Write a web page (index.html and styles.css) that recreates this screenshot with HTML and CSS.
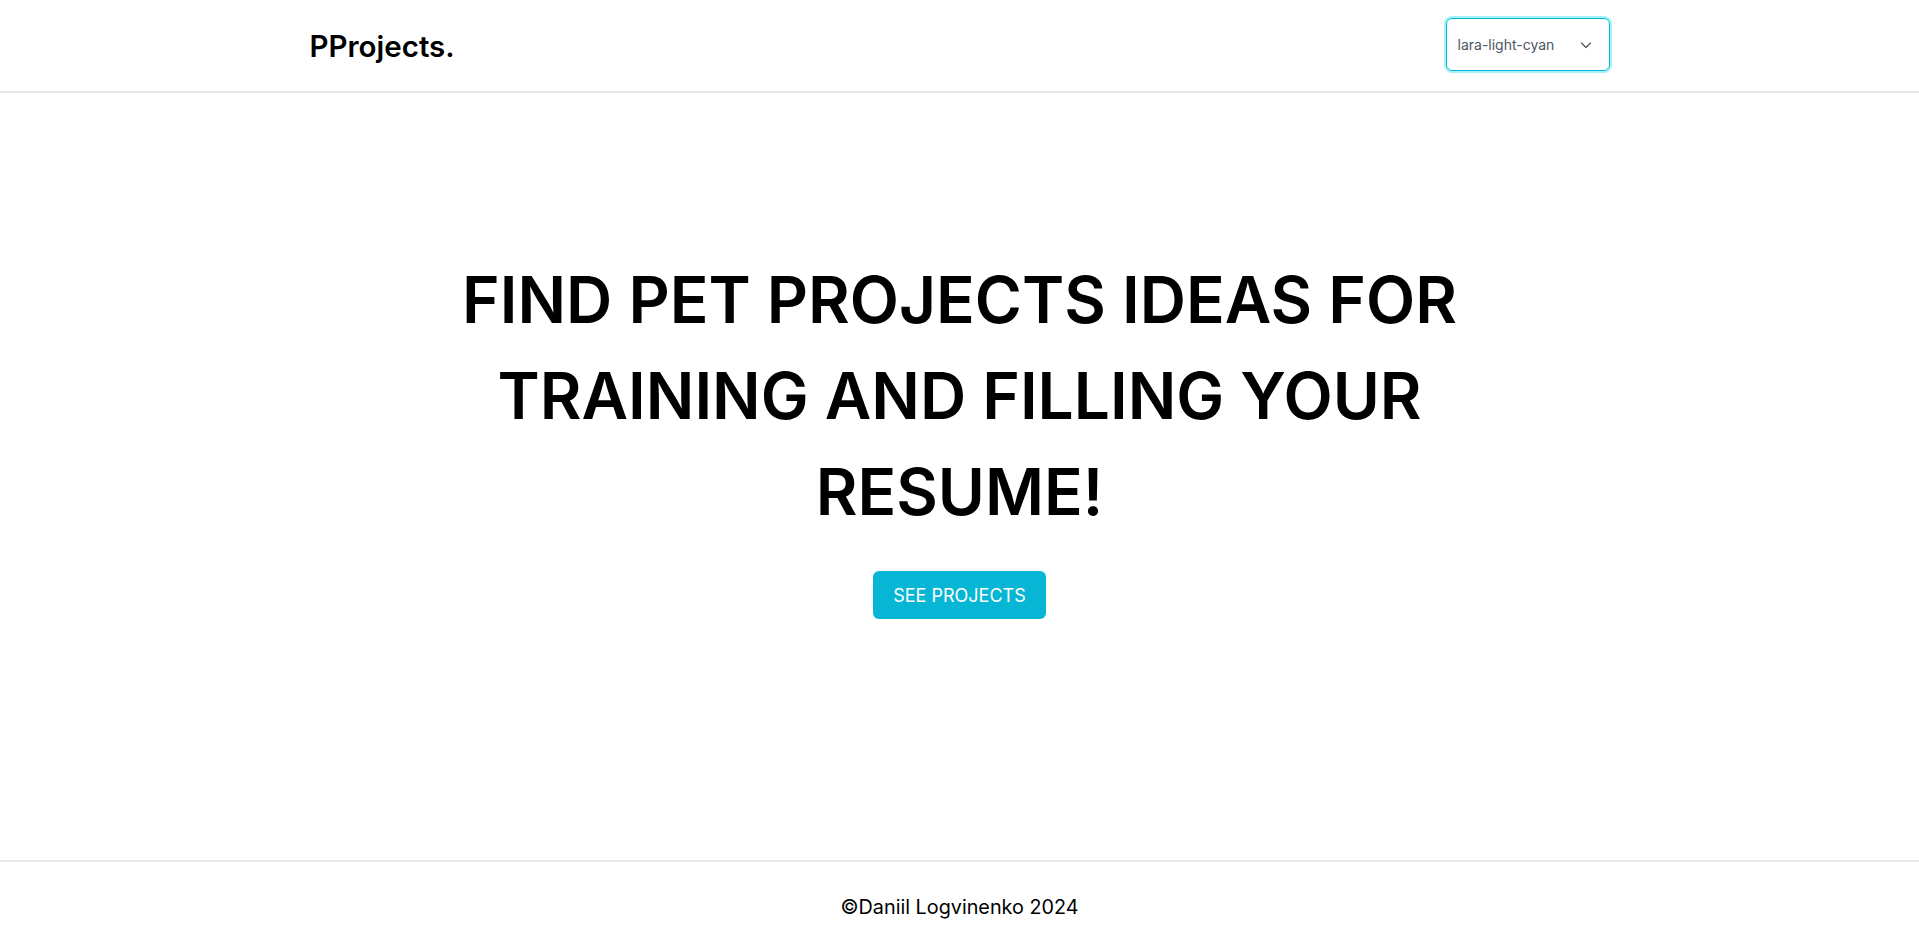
FILE: index.html
```html
<!DOCTYPE html>
<html lang="en">
<head>
<meta charset="utf-8">
<title>PProjects.</title>
<link rel="stylesheet" href="styles.css">
</head>
<body>
<div class="page">
  <header class="header">
    <div class="container header-inner">
      <a class="logo" href="#">PProjects.</a>
      <div class="theme-select">
        <span class="theme-label">lara-light-cyan</span>
        <svg class="chevron" width="14" height="14" viewBox="0 0 14 14" fill="none">
          <path d="M2.5 5 L7 9.5 L11.5 5" stroke="#4b5563" stroke-width="1.2" stroke-linecap="round" stroke-linejoin="round"/>
        </svg>
      </div>
    </div>
  </header>
  <main class="hero">
    <h1 class="hero-title">FIND PET PROJECTS IDEAS FOR TRAINING AND FILLING YOUR RESUME!</h1>
    <button class="hero-btn" type="button">SEE PROJECTS</button>
  </main>
  <footer class="footer">
    <span>©Daniil Logvinenko 2024</span>
  </footer>
</div>
</body>
</html>
```

FILE: styles.css
```css
* { box-sizing: border-box; }
html, body { margin: 0; padding: 0; background: #ffffff; }
body {
  font-family: Inter, "Noto Sans", "Liberation Sans", sans-serif;
  color: #000000;
}
.page {
  min-height: 100vh;
  display: flex;
  flex-direction: column;
}
.header {
  height: 93px;
  border-bottom: 2px solid #e6e6eb;
  flex: none;
}
.container {
  width: 1300px;
  margin: 0 auto;
}
.header-inner {
  height: 91px;
  display: flex;
  align-items: center;
  justify-content: space-between;
}
.logo {
  font-size: 29.5px;
  font-weight: 600;
  color: #000;
  text-decoration: none;
  margin-top: 1px;
}
.theme-select {
  width: 164px;
  height: 53px;
  border: 1px solid #06b6d4;
  border-radius: 6px;
  box-shadow: 0 0 0 2px #a5f3fc;
  display: flex;
  align-items: center;
  justify-content: space-between;
  padding: 0 16px 0 11px;
  margin-top: -2px;
}
.theme-label {
  font-size: 14px;
  color: #4b5563;
}
.chevron { display: block; }
.hero {
  flex: 1;
  display: flex;
  flex-direction: column;
  align-items: center;
  padding-top: 159px;
}
.hero-title {
  margin: 0;
  max-width: 1010px;
  text-align: center;
  font-size: 64px;
  font-weight: 560;
  line-height: 96px;
}
.hero-btn {
  margin-top: 31px;
  height: 48px;
  padding: 0 20px;
  border: none;
  border-radius: 6px;
  background: #06b6d4;
  color: #ffffff;
  font-family: Inter, "Noto Sans", sans-serif;
  font-size: 18px;
  font-weight: 400;
  cursor: pointer;
}
.footer {
  flex: none;
  height: 91px;
  border-top: 2px solid #e6e6eb;
  display: flex;
  align-items: center;
  justify-content: center;
  font-size: 19.8px;
}
```
